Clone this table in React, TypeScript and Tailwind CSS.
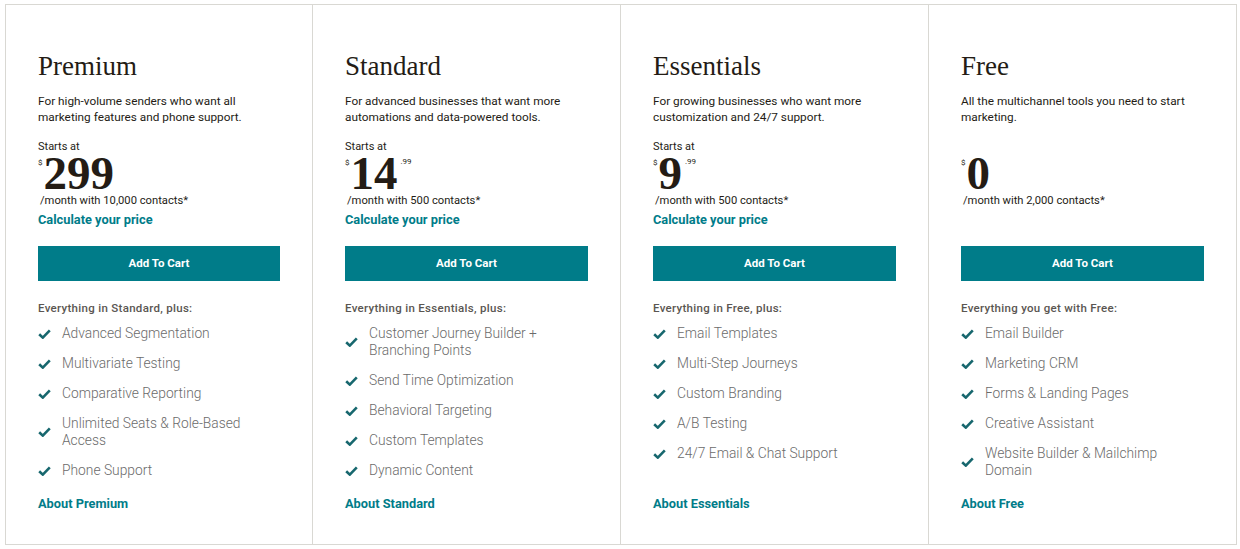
import React from "react";

type Plan = {
  name: string;
  desc: string;
  starts: boolean;
  price: string;
  cents?: string;
  contacts: string;
  calc: boolean;
  label: string;
  features: string[];
  about: string;
};

const plans: Plan[] = [
  {
    name: "Premium",
    desc: "For high-volume senders who want all marketing features and phone support.",
    starts: true,
    price: "299",
    contacts: "/month with 10,000 contacts*",
    calc: true,
    label: "Everything in Standard, plus:",
    features: [
      "Advanced Segmentation",
      "Multivariate Testing",
      "Comparative Reporting",
      "Unlimited Seats & Role-Based Access",
      "Phone Support",
    ],
    about: "About Premium",
  },
  {
    name: "Standard",
    desc: "For advanced businesses that want more automations and data-powered tools.",
    starts: true,
    price: "14",
    cents: ".99",
    contacts: "/month with 500 contacts*",
    calc: true,
    label: "Everything in Essentials, plus:",
    features: [
      "Customer Journey Builder + Branching Points",
      "Send Time Optimization",
      "Behavioral Targeting",
      "Custom Templates",
      "Dynamic Content",
    ],
    about: "About Standard",
  },
  {
    name: "Essentials",
    desc: "For growing businesses who want more customization and 24/7 support.",
    starts: true,
    price: "9",
    cents: ".99",
    contacts: "/month with 500 contacts*",
    calc: true,
    label: "Everything in Free, plus:",
    features: [
      "Email Templates",
      "Multi-Step Journeys",
      "Custom Branding",
      "A/B Testing",
      "24/7 Email & Chat Support",
    ],
    about: "About Essentials",
  },
  {
    name: "Free",
    desc: "All the multichannel tools you need to start marketing.",
    starts: false,
    price: "0",
    contacts: "/month with 2,000 contacts*",
    calc: false,
    label: "Everything you get with Free:",
    features: [
      "Email Builder",
      "Marketing CRM",
      "Forms & Landing Pages",
      "Creative Assistant",
      "Website Builder & Mailchimp Domain",
    ],
    about: "About Free",
  },
];

const sans = "font-['Roboto','Liberation_Sans',sans-serif]";
const serif = "font-['Liberation_Serif','DejaVu_Serif',serif]";

function Check() {
  return (
    <svg width="13" height="10" viewBox="0 0 13 10" className="shrink-0">
      <path
        d="M1.2 5.2 L4.8 8.6 L11.8 1.4"
        fill="none"
        stroke="#17676e"
        strokeWidth="2.6"
        strokeLinecap="butt"
        strokeLinejoin="miter"
      />
    </svg>
  );
}

function Column({ p, last }: { p: Plan; last: boolean }) {
  return (
    <div
      className={`flex flex-col px-[32px] pt-[46px] pb-[32px] ${
        last ? "" : "border-r border-[#d9d8d3]"
      }`}
    >
      <h2 className={`${serif} text-[27px] leading-[30px] text-[#241c15] font-normal`}>
        {p.name}
      </h2>
      <p className={`${sans} mt-[12px] text-[11.8px] leading-[16px] text-[#241c15]`}>
        {p.desc}
      </p>
      <div
        className={`${sans} mt-[15px] text-[11px] leading-[14px] text-[#241c15] ${
          p.starts ? "" : "invisible"
        }`}
      >
        Starts at
      </div>
      <div className="flex items-start h-[36px]">
        <span className={`${sans} text-[8px] leading-[10px] text-[#241c15] mt-[4px] mr-[1px]`}>$</span>
        <span
          className={`${serif} text-[47px] leading-[36px] font-bold text-[#241c15] pt-[1px]`}
        >
          {p.price}
        </span>
        {p.cents && (
          <span className={`${sans} text-[8px] leading-[10px] text-[#241c15] mt-[3px] ml-[3px]`}>
            {p.cents}
          </span>
        )}
      </div>
      <div className={`${sans} mt-[4px] ml-[2px] text-[11.2px] leading-[14px] text-[#241c15]`}>
        {p.contacts}
      </div>
      <a
        className={`${sans} mt-[4px] text-[12.8px] leading-[16px] font-bold text-[#007c89] ${
          p.calc ? "" : "invisible"
        }`}
      >
        Calculate your price
      </a>
      <button
        className={`${sans} mt-[18px] h-[35px] w-full bg-[#007c89] text-white text-[11.5px] font-bold`}
      >
        Add To Cart
      </button>
      <div
        className={`${sans} mt-[20px] text-[11.5px] leading-[14px] text-[#5a5652] font-medium tracking-[0.3px]`}
      >
        {p.label}
      </div>
      <ul className="mt-[10px] flex flex-col gap-[13px]">
        {p.features.map((f) => (
          <li key={f} className="flex items-center gap-[11px]">
            <Check />
            <span
              className={`${sans} w-[200px] text-[13.8px] leading-[17px] text-[#6b6b6b] font-light`}
            >
              {f}
            </span>
          </li>
        ))}
      </ul>
      <a
        className={`${sans} mt-auto text-[12.8px] leading-[16px] font-bold text-[#007c89]`}
      >
        {p.about}
      </a>
    </div>
  );
}

export default function App() {
  return (
    <div className="w-[1240px] h-[549px] bg-white pt-[4px] pl-[5px]">
      <div className="w-[1232px] h-[541px] border border-[#d9d8d3] grid grid-cols-[307px_308px_308px_307px]">
        {plans.map((p, i) => (
          <Column key={p.name} p={p} last={i === plans.length - 1} />
        ))}
      </div>
    </div>
  );
}
